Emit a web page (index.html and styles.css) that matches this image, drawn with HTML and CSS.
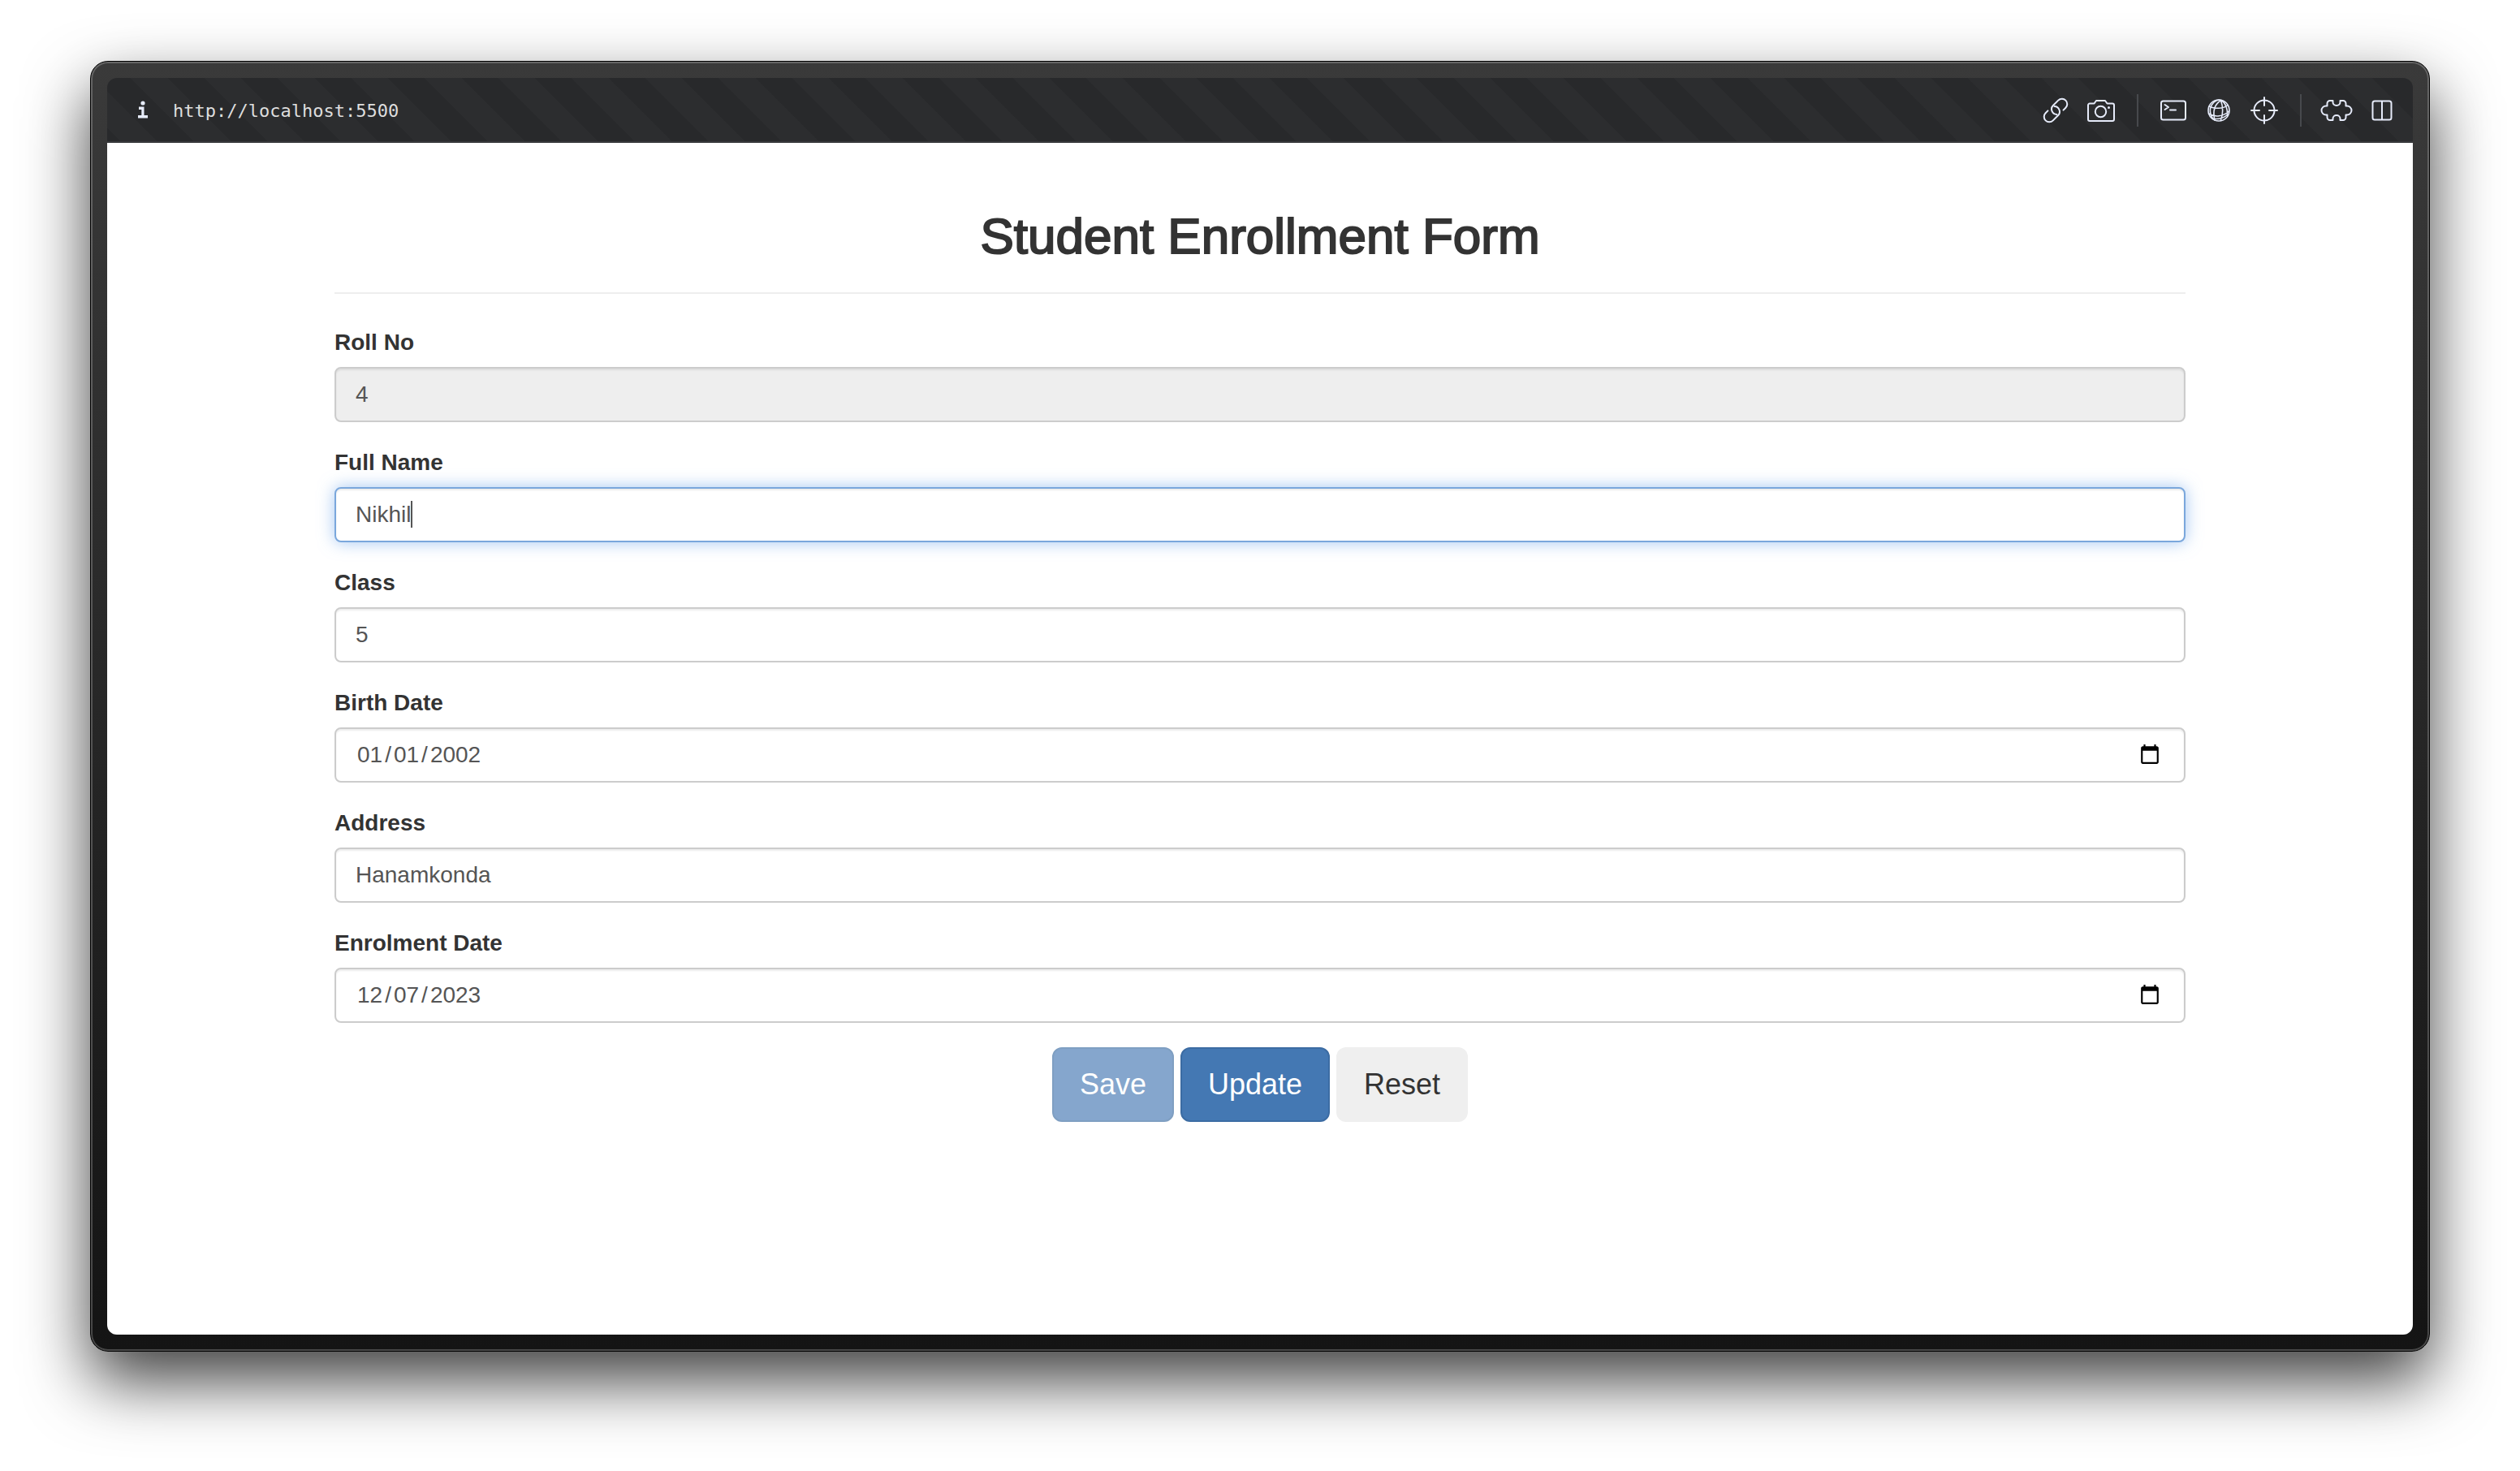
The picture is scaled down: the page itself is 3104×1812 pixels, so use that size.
FILE: index.html
```html
<!DOCTYPE html>
<html lang="en">
<head>
  <meta charset="utf-8">
  <title>Student Enrollment Form</title>
  <link rel="stylesheet" href="styles.css">
</head>
<body>
  <div class="window">
    <header class="toolbar">
      <button class="tool tool--info" type="button" aria-label="Site information">
        <svg viewBox="0 0 40 40" class="icon"><g fill="currentColor"><circle cx="20" cy="11" r="2.6"/><path d="M15 15.500h6.500v10.500h4.500v3.500h-12v-3.500h4.300v-7h-3.300z"/></g></svg>
      </button>
      <input class="address" type="text" value="http://localhost:5500" aria-label="Address" readonly>
      <div class="tools">
        <button class="tool" type="button" aria-label="Copy link">
          <svg viewBox="0 0 40 40" class="icon"><g transform="rotate(-45 20 20)"><path d="M13 13.500H9a6.500 6.500 0 0 0 0 13h9a6.500 6.500 0 0 0 4.500-11"/><path d="M27 26.500H31a6.500 6.500 0 0 0 0-13h-9a6.500 6.500 0 0 0-4.500 11"/></g></svg>
        </button>
        <button class="tool" type="button" aria-label="Screenshot">
          <svg viewBox="0 0 40 40" class="icon"><path d="M6 11.500h5.500l2.500-3.500h11l2.500 3.500H34a2 2 0 0 1 2 2V31a2 2 0 0 1-2 2H6a2 2 0 0 1-2-2V13.500a2 2 0 0 1 2-2z"/><circle cx="19.500" cy="21.500" r="6.700"/><circle cx="29.500" cy="16.500" r="1.500" class="dot"/></svg>
        </button>
        <span class="divider"></span>
        <button class="tool" type="button" aria-label="Console">
          <svg viewBox="0 0 40 40" class="icon"><rect x="5" y="8.500" width="30" height="23" rx="2.500"/><path d="M9.500 13l4.500 3-4.500 3M16 19.500h7"/></svg>
        </button>
        <button class="tool" type="button" aria-label="Network">
          <svg viewBox="0 0 40 40" class="icon icon--fine"><circle cx="20" cy="20" r="13"/><path d="M8 15c7 3.500 18 3 23-1.500M7.500 24c8 5 18 3.500 25-3M12 30c7 1.500 14-.5 19-5M23 7.500c-7 4-11 12-8 24.500M22.500 7.500c2.500 7 3 16 0 25M23 7.500c5 3 8 9 7.500 19M21 7c-5 0-10 4-11.500 11-.500 4 .500 8 3 12"/></svg>
        </button>
        <button class="tool" type="button" aria-label="Inspect element">
          <svg viewBox="0 0 40 40" class="icon"><circle cx="20" cy="20" r="12.500"/><path d="M20 4v10M20 26v10M4 20h10M26 20h10"/></svg>
        </button>
        <span class="divider"></span>
        <button class="tool" type="button" aria-label="Extensions">
          <svg viewBox="0 0 40 40" class="icon"><path d="M12 8h3.500v2a4.500 4 0 0 0 9 0V8H28a3.500 3.500 0 0 1 3.500 3.500v3H33a5 5 0 0 1 0 11h-1.500v3A3.500 3.500 0 0 1 28 32h-3.500v-2a4.500 4 0 0 0-9 0v2H12a3.500 3.500 0 0 1-3.500-3.500v-3H7a5 5 0 0 1 0-11h1.500v-3A3.500 3.500 0 0 1 12 8z"/></svg>
        </button>
        <button class="tool" type="button" aria-label="Split view">
          <svg viewBox="0 0 40 40" class="icon"><rect x="8.500" y="8.500" width="23" height="23" rx="2.500"/><path d="M20 9v22"/></svg>
        </button>
      </div>
    </header>

    <main class="page">
      <form class="form">
        <h2 class="title">Student Enrollment Form</h2>
        <div class="field">
          <label class="label" for="rollNo">Roll No</label>
          <input class="control" id="rollNo" type="text" value="4" disabled>
        </div>
        <div class="field">
          <label class="label" for="fullName">Full Name</label>
          <div class="editing">
            <input class="control control--active" id="fullName" type="text" value="Nikhil">
            <span class="caret"></span>
          </div>
        </div>
        <div class="field">
          <label class="label" for="class">Class</label>
          <input class="control" id="class" type="text" value="5">
        </div>
        <div class="field">
          <label class="label" for="birthDate">Birth Date</label>
          <input class="control" id="birthDate" type="date" value="2002-01-01">
        </div>
        <div class="field">
          <label class="label" for="address">Address</label>
          <input class="control" id="address" type="text" value="Hanamkonda">
        </div>
        <div class="field">
          <label class="label" for="enrolmentDate">Enrolment Date</label>
          <input class="control" id="enrolmentDate" type="date" value="2023-12-07">
        </div>
        <div class="actions">
          <button class="btn btn--primary" type="button" disabled>Save</button>
          <button class="btn btn--primary" type="button">Update</button>
          <button class="btn" type="button">Reset</button>
        </div>
      </form>
    </main>
  </div>
</body>
</html>
```
FILE: styles.css
```css
* {
  box-sizing: border-box;
}

body {
  display: flex;
  flex-direction: column;
  min-height: 100vh;
  margin: 0;
  padding: 75px 111px 147px;
  background: #fff;
  color: #333;
  font-family: "Helvetica Neue", Helvetica, "Liberation Sans", Arial, sans-serif;
  font-size: 28px;
  line-height: 40px;
}

.window {
  display: flex;
  flex: 1;
  flex-direction: column;
  padding: 20px;
  border: 1px solid #000;
  border-radius: 22px;
  background: linear-gradient(#3a3a3a, #141414);
  box-shadow: inset 0 0 0 2px rgba(255, 255, 255, 0.22), 0 36px 80px rgba(0, 0, 0, 0.75);
}

.toolbar {
  display: flex;
  align-items: center;
  height: 80px;
  padding: 0 10px 0 16px;
  border-radius: 12px 12px 0 0;
  background: repeating-linear-gradient(45deg, #28292b 0 13px, #2c2d2f 13px 45px, #28292b 45px 64px);
  box-shadow: inset 0 -2px #38393c;
  color: #e6ebfa;
}

.tools {
  display: flex;
  align-items: center;
}

.tool {
  display: flex;
  align-items: center;
  justify-content: center;
  width: 56px;
  height: 56px;
  padding: 0;
  border: 0;
  background: none;
  color: inherit;
}

.icon {
  width: 40px;
  height: 40px;
  overflow: visible;
  fill: none;
  stroke: currentColor;
  stroke-width: 2;
  stroke-linecap: round;
  stroke-linejoin: round;
}

.tool--info .icon {
  stroke: none;
}

.icon--fine {
  stroke-width: 1.6;
}

.dot {
  fill: currentColor;
  stroke: none;
}

.divider {
  width: 2px;
  height: 40px;
  margin: 0 15px 0 16px;
  background: #47494d;
}

.address {
  flex: 1;
  min-width: 0;
  padding: 2px 9px 0;
  border: 0;
  outline: 0;
  background: none;
  color: #dedede;
  font-family: "DejaVu Sans Mono", monospace;
  font-size: 22px;
  line-height: 40px;
}

.page {
  flex: 1;
  border-radius: 0 0 12px 12px;
  background: #fff;
}

.form {
  max-width: 2340px;
  margin: 0 auto;
  padding: 82px 30px 0;
}

.title {
  margin: 0 0 40px;
  padding-bottom: 36px;
  border-bottom: 2px solid #eee;
  font-size: 62px;
  font-weight: 500;
  line-height: 66px;
  text-align: center;
  -webkit-text-stroke: 2px #333;
}

.field {
  margin-bottom: 30px;
}

.label {
  display: block;
  margin-bottom: 10px;
  font-weight: 700;
}

.control {
  display: block;
  width: 100%;
  height: 68px;
  padding: 12px 24px;
  border: 2px solid #ccc;
  border-radius: 8px;
  outline: 0;
  background: #fff;
  box-shadow: inset 0 2px 2px rgba(0, 0, 0, 0.075);
  color: #555;
  font: inherit;
}

.control:disabled {
  background: #eee;
}

.control--active,
.control:focus {
  border-color: #7aa7dc;
  box-shadow: inset 0 2px 2px rgba(0, 0, 0, 0.075), 0 0 20px rgba(102, 160, 233, 0.6);
}

.control::-webkit-datetime-edit-fields-wrapper {
  padding: 0;
}

.control::-webkit-datetime-edit-text {
  padding: 0 1px;
}

.control::-webkit-datetime-edit-month-field,
.control::-webkit-datetime-edit-day-field,
.control::-webkit-datetime-edit-year-field {
  padding: 0 2px;
}

.control::-webkit-calendar-picker-indicator {
  box-sizing: content-box;
  width: 28px;
  height: 28px;
  padding: 4px;
}

.editing {
  position: relative;
}

.caret {
  position: absolute;
  top: 17px;
  left: 94px;
  width: 2px;
  height: 33px;
  background: #555;
}

.actions {
  display: flex;
  justify-content: center;
  gap: 8px;
}

.btn {
  padding: 20px 32px;
  border: 2px solid transparent;
  border-radius: 12px;
  background: #efefef;
  color: #333;
  font-family: inherit;
  font-size: 36px;
  line-height: 48px;
}

.btn--primary {
  border-color: #3c6ca3;
  background: #4478b3;
  color: #fff;
}

.btn:disabled {
  opacity: 0.65;
}
```
